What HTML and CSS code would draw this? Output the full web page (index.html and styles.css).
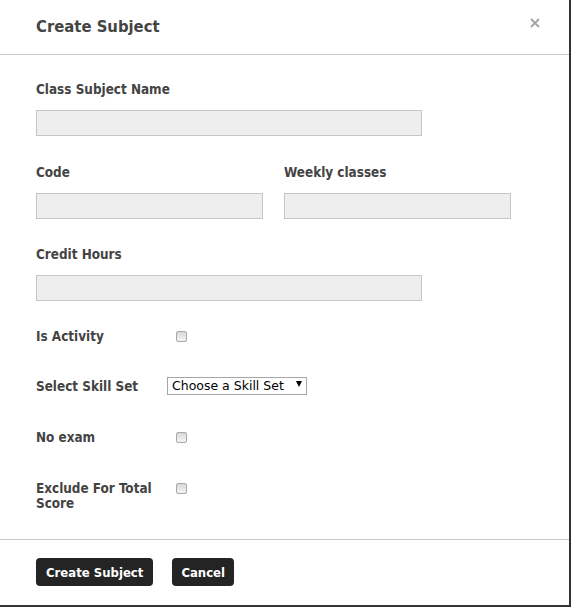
FILE: index.html
```html
<!DOCTYPE html>
<html>
<head>
<meta charset="utf-8">
<title>Create Subject</title>
<link rel="stylesheet" href="styles.css">
</head>
<body>
<div class="modal">
  <div class="modal-header">
    <h2 class="modal-title">Create Subject</h2>
    <button class="close" type="button" aria-label="Close">
      <svg width="10" height="10" viewBox="0 0 10 10"><path d="M1 1L9 9M9 1L1 9" stroke="#a3a3a3" stroke-width="1.8" fill="none"/></svg>
    </button>
  </div>
  <form class="modal-body">
    <div class="group first">
      <label class="lbl">Class Subject Name</label>
      <input class="field wide" type="text">
    </div>
    <div class="group two">
      <div class="col">
        <label class="lbl">Code</label>
        <input class="field half" type="text">
      </div>
      <div class="col">
        <label class="lbl">Weekly classes</label>
        <input class="field half" type="text">
      </div>
    </div>
    <div class="group">
      <label class="lbl">Credit Hours</label>
      <input class="field wide" type="text">
    </div>
    <div class="row first-row">
      <label class="row-lbl">Is Activity</label>
      <input class="check" type="checkbox">
    </div>
    <div class="row">
      <label class="row-lbl">Select Skill Set</label>
      <span class="select-wrap">
        <select class="select"><option>Choose a Skill Set</option></select>
      </span>
    </div>
    <div class="row">
      <label class="row-lbl">No exam</label>
      <input class="check" type="checkbox">
    </div>
    <div class="row last">
      <label class="row-lbl">Exclude For Total Score</label>
      <input class="check" type="checkbox">
    </div>
  </form>
  <div class="modal-footer">
    <button class="btn btn-primary" type="button">Create Subject</button>
    <button class="btn" type="button">Cancel</button>
  </div>
</div>
</body>
</html>
```
FILE: styles.css
```css
html, body {
  margin: 0;
  padding: 0;
  background: #fff;
}
body {
  font-family: "DejaVu Sans Condensed", "DejaVu Sans", sans-serif;
  color: #444;
}
.modal {
  width: 569px;
  height: 605px;
  background: #fff;
  border-right: 2px solid #333;
  border-bottom: 2px solid #333;
  display: flex;
  flex-direction: column;
}
.modal-header {
  box-sizing: border-box;
  height: 55px;
  flex: none;
  border-bottom: 1px solid #c8c8c8;
  display: flex;
  justify-content: space-between;
  align-items: flex-start;
  padding: 17px 29px 0 36px;
}
.modal-title {
  margin: 0;
  font-size: 16.5px;
  line-height: 20px;
  font-weight: bold;
  color: #444;
}
.close {
  border: 0;
  background: none;
  padding: 0;
  margin-top: 1px;
  width: 10px;
  height: 10px;
  display: flex;
}
.modal-body {
  flex: 1;
  margin: 0;
  padding: 27px 36px 0 36px;
}
.group {
  margin-bottom: 28px;
}
.group.first {
  margin-bottom: 29px;
}
.group.two {
  display: flex;
  gap: 21px;
}
.lbl {
  display: block;
  font-size: 13.4px;
  line-height: 16px;
  font-weight: bold;
  color: #444;
  margin-bottom: 12px;
}
.field {
  display: block;
  box-sizing: border-box;
  height: 26px;
  margin: 0;
  background: #eee;
  border: 1px solid #c6c6c6;
  border-radius: 0;
  padding: 0 6px;
  font: inherit;
}
.wide { width: 386px; }
.half { width: 227px; }
.row {
  display: flex;
  align-items: flex-start;
  height: 51px;
}
.row.first-row {
  height: 50px;
}
.row-lbl {
  width: 131px;
  font-size: 13.4px;
  line-height: 15px;
  font-weight: bold;
  color: #444;
}
.check {
  appearance: none;
  -webkit-appearance: none;
  box-sizing: border-box;
  width: 11px;
  height: 11px;
  margin: 2px 0 0 9px;
  border: 1px solid #a9a9a9;
  border-radius: 2px;
  background: linear-gradient(#d9d9d9, #f4f4f4);
}
.select-wrap {
  position: relative;
  margin-top: -4px;
  display: block;
}
.select-wrap::after {
  content: "";
  position: absolute;
  right: 5px;
  top: 6px;
  border-left: 3.5px solid transparent;
  border-right: 3.5px solid transparent;
  border-top: 6px solid #000;
  pointer-events: none;
}
.select {
  appearance: none;
  -webkit-appearance: none;
  box-sizing: border-box;
  width: 140px;
  height: 18px;
  margin: 0;
  padding: 0 0 0 4px;
  border: 1px solid #a6a6a6;
  border-radius: 0;
  background: #fff;
  color: #000;
  font-family: "DejaVu Sans", sans-serif;
  font-size: 12.5px;
  line-height: 16px;
}
.modal-footer {
  box-sizing: border-box;
  height: 66px;
  flex: none;
  border-top: 1px solid #c8c8c8;
  display: flex;
  align-items: flex-start;
  gap: 19px;
  padding: 18px 36px 0 36px;
}
.btn {
  height: 28px;
  padding: 0 9px;
  border: 0;
  border-radius: 4px;
  background: #242424;
  color: #fff;
  font-family: "DejaVu Sans Condensed", "DejaVu Sans", sans-serif;
  font-size: 13px;
  font-weight: bold;
}
.btn-primary {
  padding: 0 10px;
}
```
